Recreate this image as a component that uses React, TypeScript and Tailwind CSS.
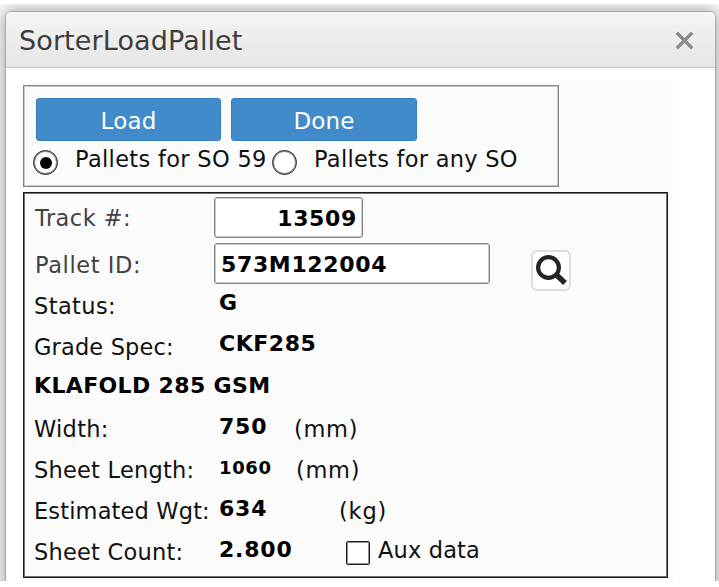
import React from "react";

const label = "shrink-0 whitespace-pre text-[22.5px] leading-[28px] text-[#111]";
const bold = "shrink-0 whitespace-pre text-[22px] font-bold leading-[28px] text-black";
const field = "h-[41px] rounded-[3px] border border-[#858585] bg-white pt-[7px] shadow-[inset_0_0_0_1px_#c9c9c9]";
const radio = "mt-[9px] flex h-[25px] w-[25px] shrink-0 items-center justify-center rounded-full border border-[#1c1c1c] bg-white shadow-[inset_0_0_0_1px_#909090]";
const button = "h-[43px] rounded-[3px] border border-[#357ebd] bg-[#428bca] pt-[2px] text-[23px] leading-[28px] tracking-[0.15px] text-white";

export default function App() {
  return (
    <div className="h-[587px] w-[719px] overflow-hidden bg-white pt-[4px] font-['Verdana','DejaVu_Sans',sans-serif]">
      <div className="h-[577px] overflow-hidden bg-white pl-[5px] pr-[3px] pt-[7px]">
        <div className="h-[590px] w-[711px] overflow-hidden rounded-t-[6px] border border-[#a9a9a9] bg-white shadow-[0_0_16px_2px_rgba(0,0,0,0.36)]">
          <header className="flex h-[56px] items-start justify-between border-b border-[#c5c3c3] bg-gradient-to-b from-[#f5f5f5] to-[#e7e5e5] pl-[13px] pr-[21px]">
            <h1 className="mt-[11px] whitespace-pre text-[27px] leading-[36px] tracking-[0.12px] text-[#3d3d3d]">SorterLoadPallet</h1>
            <svg className="mt-[19px] h-[19px] w-[19px]" viewBox="0 0 19 19" fill="none" stroke="#918988" strokeWidth="3.4">
              <path d="M1.8 1.8 17.2 17.2M17.2 1.8 1.8 17.2" />
            </svg>
          </header>
          <main className="ml-[14px] mt-[14px] h-[499px] w-[653px] bg-[#fbfbfb] pl-[3px] pt-[3px]">
            <section className="h-[102px] w-[536px] border border-[#858585] pt-[12px] shadow-[inset_0_0_0_1px_#c9c9c9]">
              <div className="flex gap-[10px] pl-[12px]">
                <button className={`${button} w-[185px]`}>Load</button>
                <button className={`${button} w-[186px]`}>Done</button>
              </div>
              <div className="flex h-[40px] items-start pl-[9px]">
                <span className={radio}>
                  <span className="h-[12px] w-[12px] rounded-full bg-black" />
                </span>
                <span className={`${label} ml-[17px] mt-[4px] w-[197px] tracking-[0.32px]`}>Pallets for SO 59</span>
                <span className={radio} />
                <span className={`${label} ml-[17px] mt-[4px] tracking-[0.27px]`}>Pallets for any SO</span>
              </div>
            </section>
            <section className="mt-[5px] h-[386px] w-[645px] border border-[#1c1c1c] pl-px pt-px shadow-[inset_0_0_0_1px_#707070]">
              <div className="flex h-[46px] items-start pl-[10px] pt-[3px]">
                <span className={`${label} mt-[7px] w-[179px] tracking-[0.45px]`}><span className="text-[#424242]">Track #:</span></span>
                <div className={`${field} w-[149px] pr-[5px] text-right`}><span className={`${bold} block tracking-[0.65px]`}>13509</span></div>
              </div>
              <div className="flex h-[47px] items-start pl-[10px] pt-[3px]">
                <span className={`${label} mt-[8px] w-[179px] tracking-[0.6px]`}><span className="text-[#424242]">Pallet ID:</span></span>
                <div className={`${field} w-[276px] pl-[6px]`}><span className={`${bold} block tracking-[0.65px]`}>573M122004</span></div>
                <button className="ml-[41px] mt-[7px] h-[41px] w-[40px] rounded-[6px] border-2 border-[#dedede] bg-white">
                  <svg className="ml-[3px] h-[34px] w-[32px]" viewBox="0 0 32 34" fill="none" stroke="#242424">
                    <circle cx="12.5" cy="13.5" r="10.4" strokeWidth="4.2" />
                    <path d="m19.5 20 9.5 9" strokeWidth="5.4" />
                  </svg>
                </button>
              </div>
              <div className="flex h-[41px] items-start pl-[9px]">
                <span className={`${label} mt-[5px] w-[185px] tracking-[0.4px]`}>Status:</span>
                <span className={`${bold} mt-[2px]`}>G</span>
              </div>
              <div className="flex h-[41px] items-start pl-[9px]">
                <span className={`${label} mt-[5px] w-[185px] tracking-[0.15px]`}>Grade Spec:</span>
                <span className={`${bold} mt-[2px] tracking-[0.55px]`}>CKF285</span>
              </div>
              <div className="flex h-[41px] items-start pl-[9px]">
                <span className={`${bold} mt-[3px] tracking-[0.35px]`}>KLAFOLD 285 GSM</span>
              </div>
              <div className="flex h-[41px] items-start pl-[9px]">
                <span className={`${label} mt-[5px] w-[185px] tracking-[0.3px]`}>Width:</span>
                <span className={`${bold} mt-[3px] w-[75px] tracking-[0.8px]`}>750</span>
                <span className={`${label} mt-[5px] tracking-[0.7px]`}>(mm)</span>
              </div>
              <div className="flex h-[41px] items-start pl-[9px]">
                <span className={`${label} mt-[5px] w-[185px] tracking-[0.22px]`}>Sheet Length:</span>
                <span className="mt-[3px] w-[77px] shrink-0 text-[18px] font-bold leading-[28px] tracking-[0.65px] text-black">1060</span>
                <span className={`${label} mt-[5px] tracking-[0.7px]`}>(mm)</span>
              </div>
              <div className="flex h-[41px] items-start pl-[9px]">
                <span className={`${label} mt-[5px] w-[185px] tracking-[0.15px]`}>Estimated Wgt:</span>
                <span className={`${bold} mt-[3px] w-[120px] tracking-[0.8px]`}>634</span>
                <span className={`${label} mt-[5px] tracking-[0.8px]`}>(kg)</span>
              </div>
              <div className="flex h-[41px] items-start pl-[9px]">
                <span className={`${label} mt-[5px] w-[185px] tracking-[0.22px]`}>Sheet Count:</span>
                <span className={`${bold} mt-[3px] w-[127px] tracking-[0.8px]`}>2.800</span>
                <span className="mt-[8px] h-[24px] w-[24px] shrink-0 rounded-[2px] border border-[#1c1c1c] bg-white shadow-[inset_0_0_0_1px_#909090]" />
                <span className={`${label} ml-[8px] mt-[3px] tracking-[0.15px]`}>Aux data</span>
              </div>
            </section>
          </main>
        </div>
      </div>
    </div>
  );
}
